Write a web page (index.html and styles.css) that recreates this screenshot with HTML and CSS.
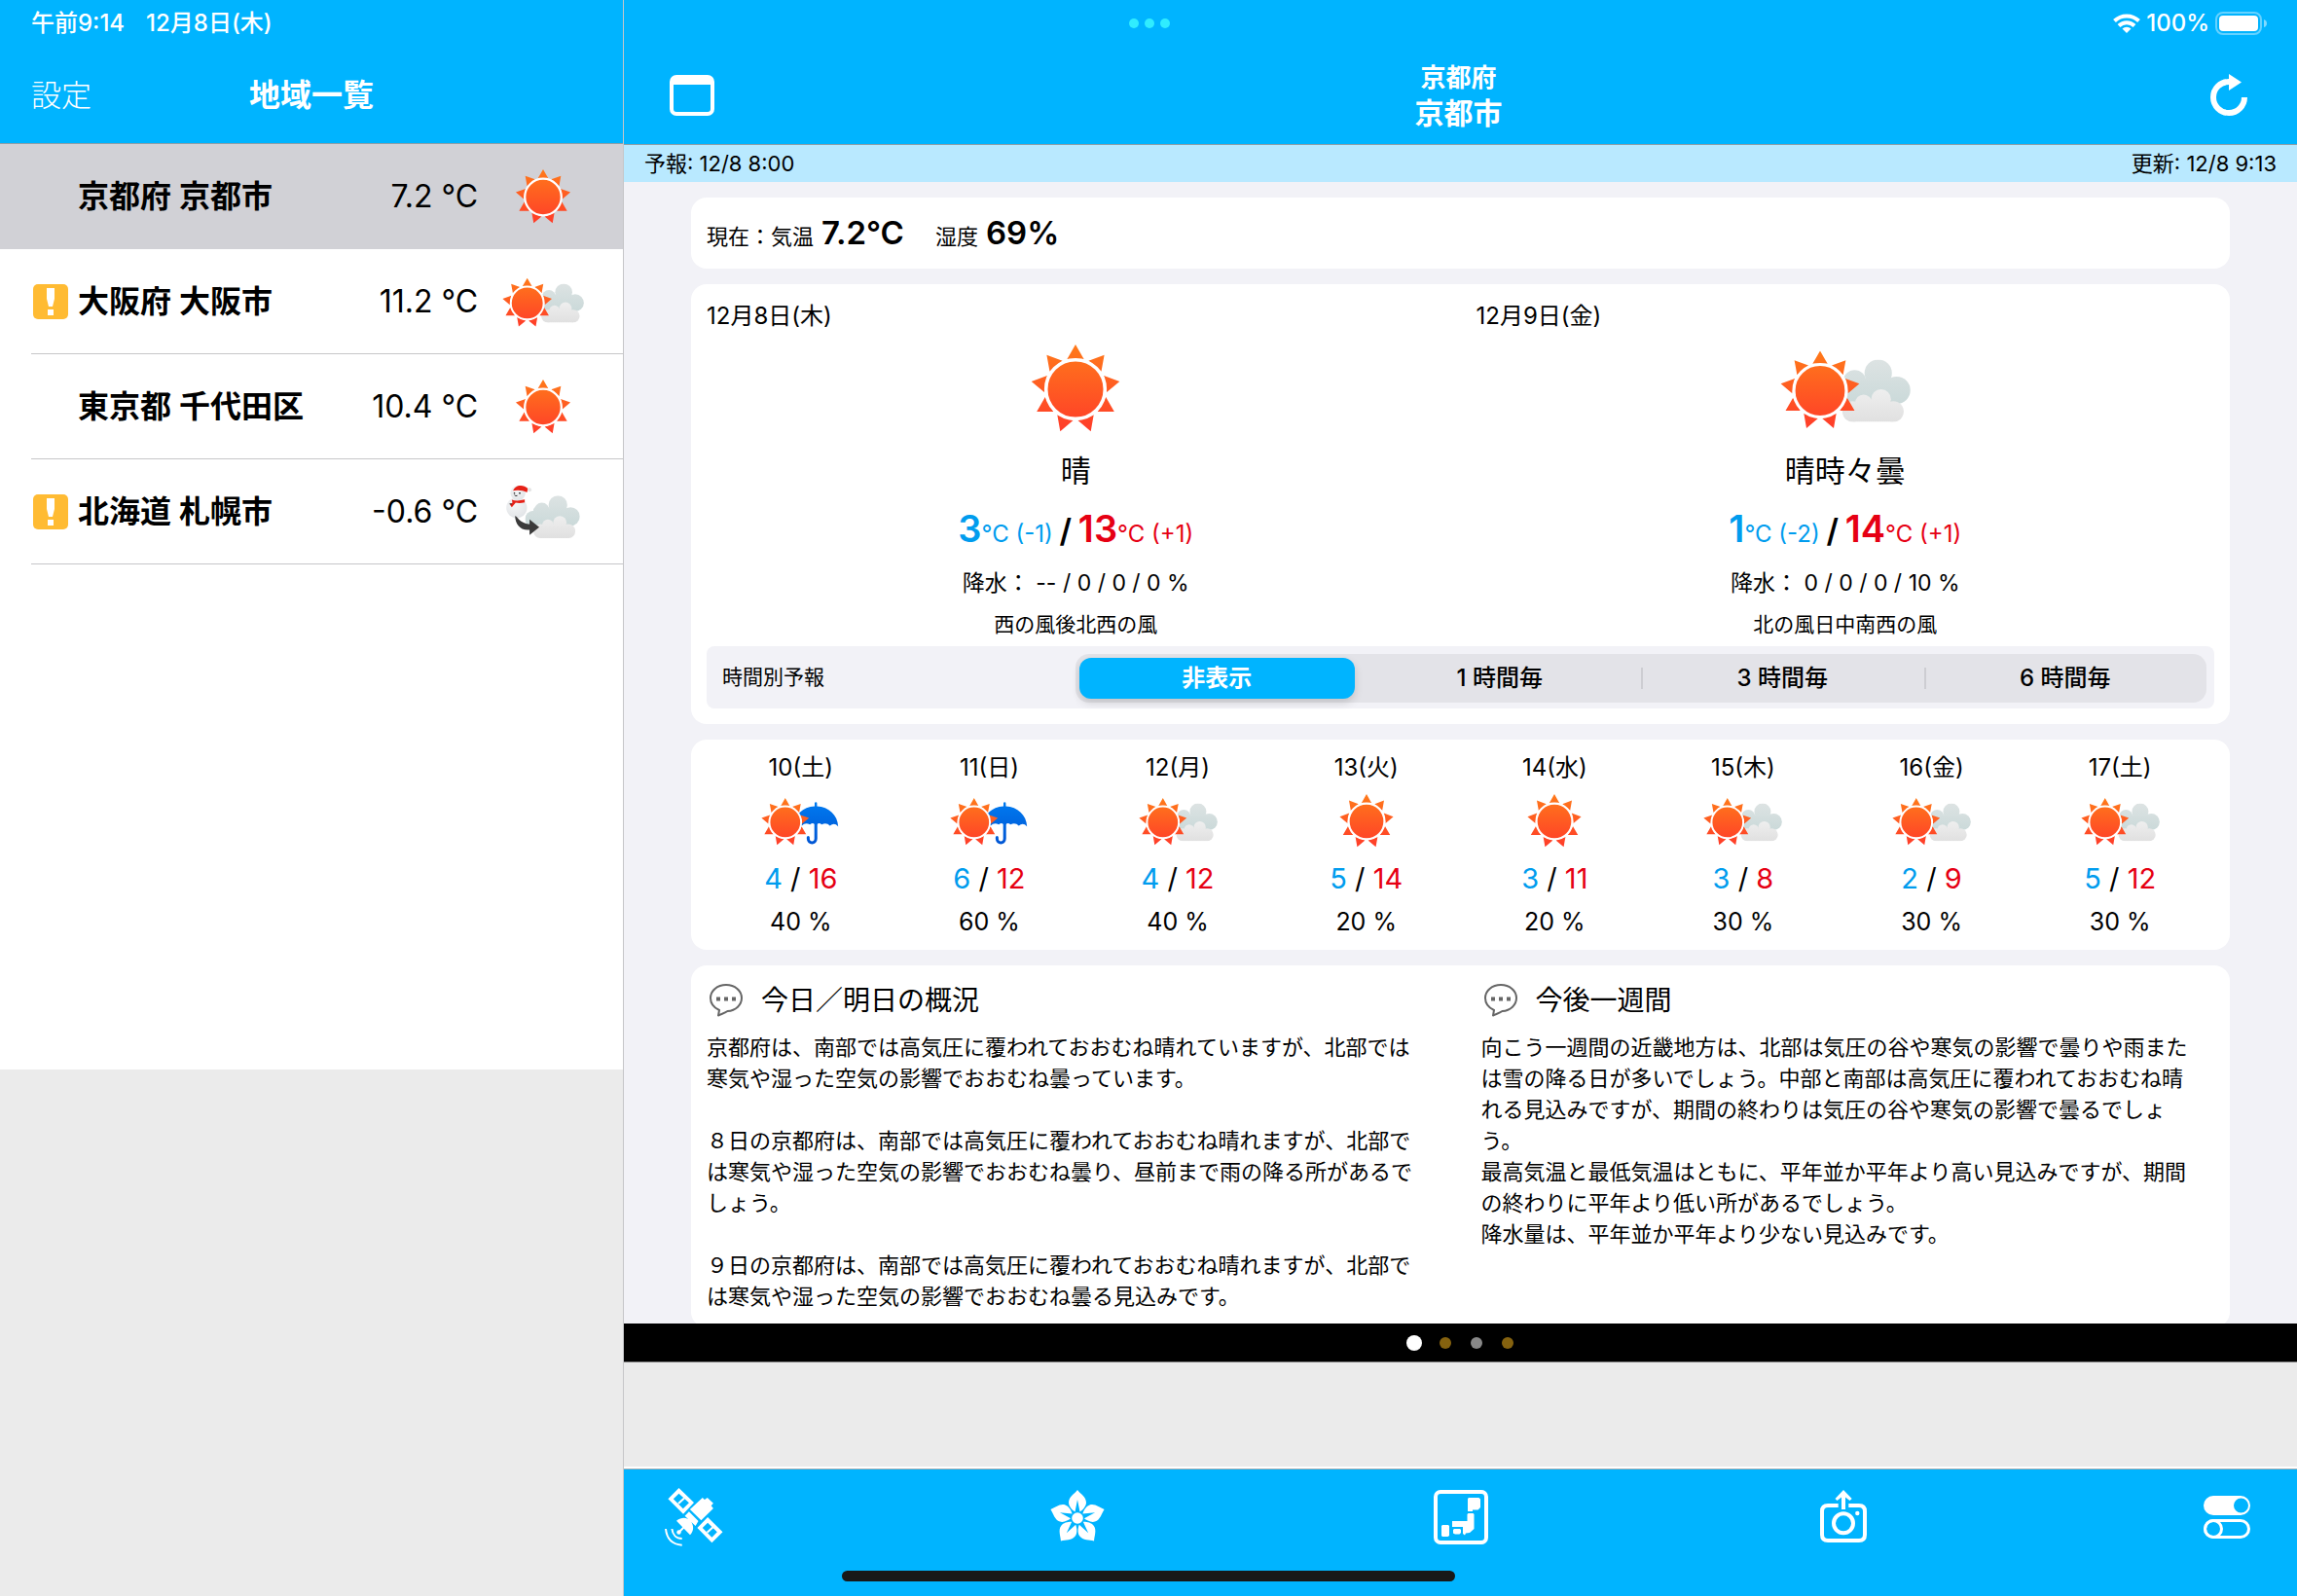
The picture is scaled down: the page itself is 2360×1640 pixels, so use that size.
FILE: index.html
```
<!DOCTYPE html>
<html lang="ja">
<head>
  <meta charset="UTF-8">
  <meta name="viewport" content="width=device-width, initial-scale=1">
  <title>京都府 京都市の天気</title>
  <link rel="stylesheet" href="styles.css">
</head>
<body>
  <!-- Shared weather icons -->
  <svg class="sprite" width="0" height="0" aria-hidden="true">
    <defs>
      <linearGradient id="sunFill" gradientUnits="userSpaceOnUse" x1="0" y1="-46" x2="0" y2="46">
        <stop offset="0" stop-color="#ff7a1a"/>
        <stop offset="1" stop-color="#ff3a2a"/>
      </linearGradient>
      <linearGradient id="cloudBack" gradientUnits="userSpaceOnUse" x1="0" y1="0" x2="0" y2="105">
        <stop offset="0" stop-color="#dde3e3"/>
        <stop offset="1" stop-color="#c8d8d8"/>
      </linearGradient>
      <linearGradient id="cloudFront" gradientUnits="userSpaceOnUse" x1="0" y1="62" x2="0" y2="132">
        <stop offset="0" stop-color="#efefef"/>
        <stop offset="1" stop-color="#e0e0e0"/>
      </linearGradient>
      <linearGradient id="umbrellaFill" gradientUnits="userSpaceOnUse" x1="0" y1="6" x2="0" y2="78">
        <stop offset="0" stop-color="#007bf0"/>
        <stop offset="1" stop-color="#0055d4"/>
      </linearGradient>
      <radialGradient id="snowFill" cx="0.4" cy="0.3" r="0.8">
        <stop offset="0" stop-color="#f6f7f8"/>
        <stop offset="1" stop-color="#dfe2e5"/>
      </radialGradient>
    </defs>
    <symbol id="sun" viewBox="-46 -46 92 92">
      <path fill="url(#sunFill)" d="M0-46L8.6-31L-8.6-31ZM29.6-35.2L26.5-18.2L13.4-29.3ZM45.3-8L32.1 3.1L29.1-13.9ZM39.8 23L22.6 23L31.2 8.1ZM15.7 43.2L2.5 32.1L18.7 26.2ZM-15.7 43.2L-2.5 32.1L-18.7 26.2ZM-39.8 23L-22.6 23L-31.2 8.1ZM-45.3-8L-32.1 3.1L-29.1-13.9ZM-29.6-35.2L-26.5-18.2L-13.4-29.3Z"/>
      <circle r="30.3" fill="url(#sunFill)" stroke="#fff" stroke-width="3.6"/>
    </symbol>
    <symbol id="cloud" viewBox="0 0 170 132">
      <g fill="url(#cloudBack)">
        <circle cx="102" cy="29" r="29"/>
        <circle cx="141" cy="65" r="29"/>
        <circle cx="52" cy="46" r="24"/>
        <circle cx="26" cy="73" r="26"/>
        <rect x="26" y="40" width="115" height="59"/>
      </g>
      <g fill="url(#cloudFront)">
        <circle cx="108" cy="84" r="21"/>
        <circle cx="71" cy="92" r="18"/>
        <circle cx="134" cy="110" r="22"/>
        <circle cx="48" cy="110" r="22"/>
        <rect x="48" y="90" width="86" height="42"/>
      </g>
    </symbol>
    <symbol id="sun-cloud" viewBox="0 -3 134 85">
      <use href="#cloud" x="51" y="9" width="83" height="64"/>
      <use href="#sun" x="0" y="0" width="82" height="82"/>
    </symbol>
    <symbol id="sun-rain" viewBox="0 -3 134 85">
      <path fill="url(#umbrellaFill)" d="M91 14V9Q91 7 93 7T95 9V14C115 15 130 29 131 48Q124 41 117 47Q111 41 103 45Q98 41 95 45H91Q88 41 83 45Q75 41 69 47Q62 41 55 48C56 29 71 15 91 14Z"/>
      <path fill="none" stroke="url(#umbrellaFill)" stroke-width="5" stroke-linecap="round" d="M93 44V69C93 78 80 78 80 69V67"/>
      <use href="#sun" x="0" y="0" width="82" height="82"/>
    </symbol>
    <symbol id="snow-cloud" viewBox="-8 0 242 172">
      <use href="#cloud" x="57" y="34" width="170" height="132"/>
      <circle cx="31" cy="72" r="32" fill="url(#snowFill)"/>
      <circle cx="35" cy="26" r="23" fill="url(#snowFill)"/>
      <path fill="#e62117" d="M20 19C24 2 50-4 66 12L63 24C50 17 34 16 20 19ZM16 47C28 51 42 50 56 46V55C44 58 34 57 28 56L16 70L10 62L18 56Z"/>
      <circle cx="71" cy="16" r="6" fill="#e4e4e4"/>
      <path fill="#333" d="M22 24h4v5h-4zM38 24h5v5h-5zM6 60l8-3 3 5z"/>
      <path fill="none" stroke="#333" stroke-width="3" d="M24 32Q28 37 33 34"/>
      <path fill="#3a3a3a" d="M26 97C33 97 38 118 71 123V108L101 132L71 156V140C42 143 27 122 26 97Z"/>
    </symbol>
    <symbol id="bubble" viewBox="0 0 34 34">
      <path fill="none" stroke="#666" stroke-width="2" stroke-linejoin="round" d="M17 1C8 1 1 7 1 14.500C1 20 4.500 24.500 10 27L9 32.500C12 31 15.500 30 18.500 28C27 27.500 33 21.500 33 14.500C33 7 26 1 17 1Z"/>
      <path fill="#666" d="M7 13.500h4v4h-4zM15 13.500h4v4h-4zM23 13.500h4v4h-4z"/>
    </symbol>
    <symbol id="warning" viewBox="0 0 36 36">
      <rect width="36" height="36" rx="5" fill="#fb3"/>
      <path fill="#fff" d="M14 4H22V15L20 23H16L14 15ZM15 26H21V32H15Z"/>
    </symbol>
  </svg>

  <div class="status-bar">
    <div class="status-time"><span>午前9:14</span><span>12月8日(木)</span></div>
    <div class="status-dots"><i></i><i></i><i></i></div>
    <div class="status-power">
      <svg width="28" height="20" viewBox="0 0 28 20">
        <path fill="none" stroke="#fff" stroke-width="4" d="M1.500 7.500A18 18 0 0 1 26.500 7.500M6 12.500A11.500 11.500 0 0 1 22 12.500"/>
        <path fill="#fff" d="M9.500 15.500A6.500 6.500 0 0 1 18.500 15.500L14 20Z"/>
      </svg>
      <span>100%</span>
      <svg width="54" height="24" viewBox="0 0 54 24">
        <rect x="1" y="1" width="46" height="22" rx="7" fill="none" stroke="#fff" stroke-opacity="0.4" stroke-width="2"/>
        <rect x="4" y="4" width="40" height="16" rx="4" fill="#fff"/>
        <path fill="#fff" fill-opacity="0.5" d="M50 8Q53 9 53 12T50 16Z"/>
      </svg>
    </div>
  </div>

  <div class="app">
    <!-- Area list -->
    <aside class="sidebar">
      <header class="nav">
        <button class="nav-text" type="button">設定</button>
        <h1 class="nav-title">地域一覧</h1>
      </header>
      <ul class="area-list">
        <li class="area selected">
          <span class="area-alert"></span>
          <span class="area-name">京都府 京都市</span>
          <span class="area-temp">7.2 °C</span>
          <svg class="area-icon"><use href="#sun"/></svg>
        </li>
        <li class="area">
          <svg class="area-alert"><use href="#warning"/></svg>
          <span class="area-name">大阪府 大阪市</span>
          <span class="area-temp">11.2 °C</span>
          <svg class="area-icon"><use href="#sun-cloud"/></svg>
        </li>
        <li class="area">
          <span class="area-alert"></span>
          <span class="area-name">東京都 千代田区</span>
          <span class="area-temp">10.4 °C</span>
          <svg class="area-icon"><use href="#sun"/></svg>
        </li>
        <li class="area">
          <svg class="area-alert"><use href="#warning"/></svg>
          <span class="area-name">北海道 札幌市</span>
          <span class="area-temp">-0.6 °C</span>
          <svg class="area-icon"><use href="#snow-cloud"/></svg>
        </li>
      </ul>
      <div class="sidebar-banner"></div>
    </aside>

    <!-- Forecast -->
    <main class="detail">
      <header class="nav">
        <button class="nav-button" type="button" aria-label="カレンダー">
          <svg width="46" height="42" viewBox="0 0 46 42">
            <rect x="2" y="2" width="42" height="38" rx="5" fill="none" stroke="#fff" stroke-width="4"/>
            <path fill="#fff" d="M2 3H44V10H2Z"/>
          </svg>
        </button>
        <h2 class="nav-place"><small>京都府</small>京都市</h2>
        <button class="nav-button end" type="button" aria-label="更新">
          <svg width="38" height="44" viewBox="0 0 38 44">
            <path fill="none" stroke="#fff" stroke-width="6" d="M35 24A16 16 0 1 1 19 8"/>
            <path fill="#fff" d="M19 0L32 8.500L19 17Z"/>
          </svg>
        </button>
      </header>
      <div class="update-bar"><span>予報: 12/8 8:00</span><span>更新: 12/8 9:13</span></div>

      <div class="content">
        <section class="card now">
          <span>現在：気温</span><strong>7.2°C</strong>
          <span class="now-next">湿度</span><strong>69%</strong>
        </section>

        <section class="card two-days">
          <div class="days">
            <article class="day">
              <h3 class="day-date">12月8日(木)</h3>
              <svg class="day-icon"><use href="#sun"/></svg>
              <p class="day-weather">晴</p>
              <p class="day-temp"><span class="low"><b>3</b>°C (-1)</span> <b class="slash">/</b> <span class="high"><b>13</b>°C (+1)</span></p>
              <p class="day-rain">降水： -- / 0 / 0 / 0 %</p>
              <p class="day-wind">西の風後北西の風</p>
            </article>
            <article class="day">
              <h3 class="day-date">12月9日(金)</h3>
              <svg class="day-icon pair"><use href="#sun-cloud"/></svg>
              <p class="day-weather">晴時々曇</p>
              <p class="day-temp"><span class="low"><b>1</b>°C (-2)</span> <b class="slash">/</b> <span class="high"><b>14</b>°C (+1)</span></p>
              <p class="day-rain">降水： 0 / 0 / 0 / 10 %</p>
              <p class="day-wind">北の風日中南西の風</p>
            </article>
          </div>
          <fieldset class="hourly">
            <legend class="hourly-label">時間別予報</legend>
            <div class="segments">
              <label class="segment"><input type="radio" name="hourly" checked><span>非表示</span></label>
              <label class="segment"><input type="radio" name="hourly"><span>1 時間毎</span></label>
              <label class="segment"><input type="radio" name="hourly"><span>3 時間毎</span></label>
              <label class="segment"><input type="radio" name="hourly"><span>6 時間毎</span></label>
            </div>
          </fieldset>
        </section>

        <ul class="card week">
          <li class="week-day">
            <span class="week-date">10(土)</span>
            <svg class="week-icon pair"><use href="#sun-rain"/></svg>
            <span class="week-temp"><span class="low">4</span> / <span class="high">16</span></span>
            <span class="week-rain">40 %</span>
          </li>
          <li class="week-day">
            <span class="week-date">11(日)</span>
            <svg class="week-icon pair"><use href="#sun-rain"/></svg>
            <span class="week-temp"><span class="low">6</span> / <span class="high">12</span></span>
            <span class="week-rain">60 %</span>
          </li>
          <li class="week-day">
            <span class="week-date">12(月)</span>
            <svg class="week-icon pair"><use href="#sun-cloud"/></svg>
            <span class="week-temp"><span class="low">4</span> / <span class="high">12</span></span>
            <span class="week-rain">40 %</span>
          </li>
          <li class="week-day">
            <span class="week-date">13(火)</span>
            <svg class="week-icon"><use href="#sun"/></svg>
            <span class="week-temp"><span class="low">5</span> / <span class="high">14</span></span>
            <span class="week-rain">20 %</span>
          </li>
          <li class="week-day">
            <span class="week-date">14(水)</span>
            <svg class="week-icon"><use href="#sun"/></svg>
            <span class="week-temp"><span class="low">3</span> / <span class="high">11</span></span>
            <span class="week-rain">20 %</span>
          </li>
          <li class="week-day">
            <span class="week-date">15(木)</span>
            <svg class="week-icon pair"><use href="#sun-cloud"/></svg>
            <span class="week-temp"><span class="low">3</span> / <span class="high">8</span></span>
            <span class="week-rain">30 %</span>
          </li>
          <li class="week-day">
            <span class="week-date">16(金)</span>
            <svg class="week-icon pair"><use href="#sun-cloud"/></svg>
            <span class="week-temp"><span class="low">2</span> / <span class="high">9</span></span>
            <span class="week-rain">30 %</span>
          </li>
          <li class="week-day">
            <span class="week-date">17(土)</span>
            <svg class="week-icon pair"><use href="#sun-cloud"/></svg>
            <span class="week-temp"><span class="low">5</span> / <span class="high">12</span></span>
            <span class="week-rain">30 %</span>
          </li>
        </ul>

        <section class="card overview">
          <article>
            <h3 class="overview-title"><svg class="bubble"><use href="#bubble"/></svg>今日／明日の概況</h3>
            <p>京都府は、南部では高気圧に覆われておおむね晴れていますが、北部では寒気や湿った空気の影響でおおむね曇っています。</p>
            <p>８日の京都府は、南部では高気圧に覆われておおむね晴れますが、北部では寒気や湿った空気の影響でおおむね曇り、昼前まで雨の降る所があるでしょう。</p>
            <p>９日の京都府は、南部では高気圧に覆われておおむね晴れますが、北部では寒気や湿った空気の影響でおおむね曇る見込みです。</p>
          </article>
          <article>
            <h3 class="overview-title"><svg class="bubble"><use href="#bubble"/></svg>今後一週間</h3>
            <p>向こう一週間の近畿地方は、北部は気圧の谷や寒気の影響で曇りや雨または雪の降る日が多いでしょう。中部と南部は高気圧に覆われておおむね晴れる見込みですが、期間の終わりは気圧の谷や寒気の影響で曇るでしょう。<br>最高気温と最低気温はともに、平年並か平年より高い見込みですが、期間の終わりに平年より低い所があるでしょう。<br>降水量は、平年並か平年より少ない見込みです。</p>
          </article>
        </section>
      </div>

      <div class="pager">
        <i class="dot current"></i><i class="dot gold"></i><i class="dot"></i><i class="dot gold"></i>
      </div>
      <div class="detail-banner"></div>

      <nav class="toolbar">
        <button type="button" aria-label="衛星">
          <svg width="60" height="60" viewBox="0 0 60 60" fill="#fff">
            <path fill-rule="evenodd" d="M14.500 0L30 15L19 26.700L3.400 11.300ZM14.500 5.700L8.800 11.300L18.800 21.300L24.900 15.300ZM44.100 30L59.500 45.300L48.400 56.300L33.400 41ZM44.100 35.700L38.800 41L48.400 50.700L53.800 45.300Z"/>
            <path d="M38.800 10L40.900 12L43.800 10L49.900 15.700L47.700 18.300L49.900 21L37.400 33.300L25.900 22ZM24.900 24.300L34.500 34L31.600 39L20.600 28.700ZM12 33.700C18 29.500 23 30 27 34.500C30 39 30 44 26 48.300Z"/>
            <circle cx="14.500" cy="45.500" r="2.200"/>
            <path fill="none" stroke="#fff" stroke-width="2" d="M14 16L20 10.500M43.500 45.800L49.500 40.300M14.500 45.500L20 40M1 42C2 52 8 58 17.700 58.700M7.400 42C8 48 12 52 17.700 52"/>
          </svg>
        </button>
        <button type="button" aria-label="花">
          <svg width="60" height="60" viewBox="0 0 60 60" fill="#fff">
            <defs><path id="petal" d="M30 2C33 6 39 9 39 15C39 19 35 23 32.500 24.500L30 12L27.500 24.500C25 23 21 19 21 15C21 9 27 6 30 2Z"/></defs>
            <use href="#petal"/>
            <use href="#petal" transform="rotate(72 30 31)"/>
            <use href="#petal" transform="rotate(144 30 31)"/>
            <use href="#petal" transform="rotate(216 30 31)"/>
            <use href="#petal" transform="rotate(288 30 31)"/>
            <circle cx="30" cy="31" r="5.800"/>
          </svg>
        </button>
        <button type="button" aria-label="地図">
          <svg width="60" height="60" viewBox="0 0 60 60" fill="#fff">
            <rect x="4" y="4" width="52" height="52" rx="5" fill="none" stroke="#fff" stroke-width="4"/>
            <path d="M38 10H48.500L50 11.500V20L47.500 22.500H42V24H37V11ZM37.500 26H42.500L43.500 27V42L39 46L35 46.500L34 48.500L32 47V40H21V34H36.500V27ZM11 38H17L18 39V49L16.500 50H11L10 49V39ZM23 42H29L30 43V46L28.500 47.500H24L22 46.500V43Z"/>
          </svg>
        </button>
        <button type="button" aria-label="カメラ">
          <svg width="60" height="60" viewBox="0 0 60 60" fill="#fff">
            <path fill="none" stroke="#fff" stroke-width="4" d="M24.700 18H14Q8 18 8 24V48Q8 54 14 54H46Q52 54 52 48V24Q52 18 46 18H35.300"/>
            <circle cx="30" cy="36.300" r="10" fill="none" stroke="#fff" stroke-width="4"/>
            <circle cx="44.300" cy="26" r="2.200"/>
            <path d="M30 2L38.700 11L36.500 13L32 9.500V22H28V9.500L23.500 13L21.500 11Z"/>
          </svg>
        </button>
        <button type="button" aria-label="切り替え">
          <svg width="60" height="60" viewBox="0 0 60 60">
            <path fill="#fff" fill-rule="evenodd" d="M16 8H44A10 10 0 0 1 44 28H16A10 10 0 0 1 16 8ZM44.500 10.500A7.500 7.500 0 0 0 44.500 25.500A7.500 7.500 0 0 0 44.500 10.500Z"/>
            <rect x="7.500" y="33.500" width="45" height="17" rx="8.500" fill="none" stroke="#fff" stroke-width="3"/>
            <circle cx="16" cy="42" r="8.500" fill="none" stroke="#fff" stroke-width="3"/>
          </svg>
        </button>
      </nav>
    </main>
  </div>
  <div class="home-indicator"></div>
</body>
</html>
```
FILE: styles.css
```
/* Reset & Base Styles */
* {
  box-sizing: border-box;
  margin: 0;
  padding: 0;
}
body {
  font-family: Inter, "Noto Sans CJK JP", sans-serif;
  font-size: 22px;
  line-height: 32px;
  color: #000;
  background: #ebebeb;
  position: relative;
  height: 100vh;
  overflow: hidden;
}
ul {
  list-style: none;
}
button {
  background: none;
  border: none;
  color: inherit;
  font: inherit;
  cursor: pointer;
}
svg {
  display: block;
}
h1, h2, h3 {
  font-weight: 400;
}
.sprite {
  position: absolute;
}

/* Status bar floats over both panes */
.status-bar {
  position: absolute;
  top: 0;
  left: 0;
  right: 0;
  z-index: 2;
  height: 48px;
  padding: 0 30px 0 32px;
  display: grid;
  grid-template-columns: 1fr auto 1fr;
  align-items: center;
  color: #fff;
  font-size: 24px;
  font-weight: 500;
}
.status-time {
  display: flex;
  gap: 22px;
}
.status-dots {
  display: flex;
  gap: 6px;
}
.status-dots i {
  width: 10px;
  height: 10px;
  border-radius: 50%;
  background: #30ecff;
}
.status-power {
  display: flex;
  align-items: center;
  justify-content: flex-end;
  gap: 6px;
}

/* Panes */
.app {
  display: flex;
  height: 100%;
}
.sidebar {
  width: 641px;
  flex-shrink: 0;
  display: flex;
  flex-direction: column;
  background: #fff;
  border-right: 1px solid #c6c6c8;
}
.detail {
  flex: 1;
  min-width: 0;
  display: flex;
  flex-direction: column;
  background: #f2f2f7;
}
.nav {
  height: 149px;
  flex-shrink: 0;
  padding: 48px 51px 0 47px;
  display: grid;
  grid-template-columns: 1fr auto 1fr;
  align-items: center;
  background: #00b4ff;
  border-bottom: 1px solid #8d9fa8;
  color: #fff;
}
.sidebar .nav {
  height: 148px;
  padding: 48px 32px 0;
}
.nav-text {
  justify-self: start;
  font-size: 31px;
  font-weight: 300;
}
.nav-title {
  font-size: 32px;
  font-weight: 600;
}
.nav-place {
  font-size: 30px;
  line-height: 37px;
  font-weight: 600;
  text-align: center;
}
.nav-place small {
  display: block;
  font-size: 26px;
}
.nav-button {
  justify-self: start;
}
.nav-button.end {
  justify-self: end;
}

/* Area list */
.area-list {
  flex: 1;
}
.area {
  height: 108px;
  padding-left: 34px;
  padding-right: 40px;
  display: flex;
  align-items: center;
  font-size: 32px;
  background: linear-gradient(#c6c6c8, #c6c6c8) 32px 100% / 100% 1px no-repeat;
}
.area.selected {
  background: #d1d1d6;
}
.area-alert {
  width: 36px;
  height: 36px;
  margin-right: 10px;
}
.area-name {
  flex: 1;
  font-weight: 600;
}
.area-temp {
  margin-right: 25px;
}
.area-icon {
  width: 84px;
  height: 57px;
}
.sidebar-banner {
  height: 33vh;
  background: #ebebeb;
}

/* Forecast */
.update-bar {
  flex-shrink: 0;
  height: 38px;
  padding: 0 21px;
  display: flex;
  align-items: center;
  justify-content: space-between;
  background: #b9e9ff;
}
.content {
  flex: 1;
  min-height: 0;
  overflow: hidden;
  padding: 16px 69px 0;
}
.card {
  margin-bottom: 16px;
  border-radius: 16px;
  background: #fff;
}
.low {
  color: #009cee;
}
.high {
  color: #e60013;
}
.now {
  height: 73px;
  padding: 0 16px;
  display: flex;
  align-items: baseline;
  line-height: 73px;
}
.now strong {
  margin-left: 8px;
  font-size: 33px;
  font-weight: 600;
}
.now-next {
  margin-left: 32px;
}
.two-days {
  padding-bottom: 16px;
}
.days {
  display: grid;
  grid-template-columns: 1fr 1fr;
}
.day {
  padding-top: 16px;
  text-align: center;
}
.day-date {
  padding-left: 16px;
  font-size: 24px;
  line-height: 34px;
  text-align: left;
}
.day-icon {
  width: 92px;
  height: 92px;
  margin: 12px auto;
}
.day-icon.pair {
  width: 134px;
}
.day-weather {
  font-size: 31px;
  line-height: 52px;
}
.day-temp {
  margin-top: 3px;
  font-size: 24px;
  line-height: 60px;
}
.day-temp b {
  font-size: 38px;
  font-weight: 600;
}
.day-temp .slash {
  font-size: 33px;
}
.day-rain {
  font-size: 23px;
  line-height: 40px;
}
.day-wind {
  font-size: 21px;
  line-height: 45px;
}
.hourly {
  height: 64px;
  margin: 0 16px;
  padding: 8px;
  border: none;
  border-radius: 8px;
  background: #f2f2f7;
  display: flex;
}
.hourly-label {
  float: left;
  flex: 0 0 371px;
  padding-left: 8px;
  font-size: 21px;
  line-height: 48px;
}
.segments {
  flex: 1;
  height: 50px;
  padding: 4px 0;
  display: flex;
  border-radius: 14px;
  background: #e3e3e8;
}
.segment {
  flex: 1;
  position: relative;
  padding: 0 4px;
  cursor: pointer;
}
.segment input {
  position: absolute;
  opacity: 0;
}
.segment span {
  display: block;
  border-radius: 12px;
  font-size: 24px;
  font-weight: 500;
  line-height: 42px;
  text-align: center;
}
.segment input:checked + span {
  background: #00b4ff;
  color: #fff;
  font-weight: 700;
  box-shadow: 0 4px 8px rgba(0,0,0,0.15);
}
.segment:nth-child(n+3) {
  background: linear-gradient(#cdcdd2, #cdcdd2) 0 50% / 2px 22px no-repeat;
}
.week {
  height: 216px;
  padding: 12px 16px;
  display: grid;
  grid-template-columns: repeat(8, 1fr);
}
.week-day {
  display: flex;
  flex-direction: column;
  align-items: center;
}
.week-date {
  font-size: 24px;
  line-height: 34px;
}
.week-icon {
  width: 56px;
  height: 56px;
  margin: 10px 0;
}
.week-icon.pair {
  width: 81px;
}
.week-temp {
  font-size: 29px;
  line-height: 42px;
}
.week-rain {
  font-size: 25px;
  line-height: 46px;
}
.overview {
  padding: 16px;
  display: grid;
  grid-template-columns: 1fr 1fr;
  gap: 42px;
}
.overview-title {
  padding-left: 3px;
  margin-bottom: 12px;
  display: flex;
  align-items: center;
  gap: 19px;
  font-size: 28px;
  line-height: 40px;
}
.bubble {
  width: 34px;
  height: 34px;
}
.overview p {
  padding-right: 12px;
  font-size: 22px;
  line-height: 32px;
}
.overview p + p {
  margin-top: 32px;
}

/* Pager & toolbar */
.pager {
  flex-shrink: 0;
  height: 40px;
  display: flex;
  align-items: center;
  justify-content: center;
  gap: 20px;
  background: #000;
  border-bottom: 1px solid #777;
}
.dot {
  width: 12px;
  height: 12px;
  border-radius: 50%;
  background: #888;
}
.dot.gold {
  background: #85620f;
}
.dot.current {
  width: 16px;
  height: 16px;
  margin: 0 -2px;
  background: #fff;
}
.detail-banner {
  flex-shrink: 0;
  height: 109px;
  background: #ebebeb;
  border-bottom: 2px solid #fff;
}
.toolbar {
  flex-shrink: 0;
  height: 131px;
  padding: 19px 42px;
  display: flex;
  align-items: flex-start;
  justify-content: space-between;
  background: #00b4ff;
  border-top: 1px solid #a5adb2;
}
.home-indicator {
  position: absolute;
  left: 50%;
  bottom: 15px;
  width: 630px;
  height: 11px;
  transform: translateX(-50%);
  border-radius: 6px;
  background: #181818;
}
```
